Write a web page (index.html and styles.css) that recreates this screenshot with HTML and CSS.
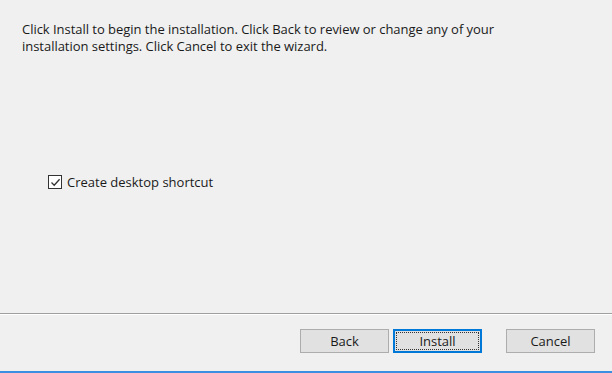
FILE: index.html
```html
<!DOCTYPE html>
<html>
<head>
<meta charset="utf-8">
<link rel="stylesheet" href="styles.css">
</head>
<body>
<div class="dialog">
  <div class="content">
    <p class="intro">Click Install to begin the installation. Click Back to review or change any of your<br>installation settings. Click Cancel to exit the wizard.</p>
    <label class="check">
      <span class="box"><svg width="11" height="11" viewBox="0 0 11 11"><path d="M1.5 5.5 L4.2 8.2 L9.6 2.2" fill="none" stroke="#333" stroke-width="1.3"/></svg></span>
      <span class="check-label">Create desktop shortcut</span>
    </label>
  </div>
  <div class="footer">
    <button class="btn">Back</button>
    <button class="btn primary"><span class="focus">Install</span></button>
    <button class="btn cancel">Cancel</button>
  </div>
  <div class="accent"></div>
</div>
</body>
</html>
```
FILE: styles.css
```css
html, body {
  margin: 0;
  padding: 0;
  background: #f0f0f0;
}
.dialog {
  width: 612px;
  height: 373px;
  display: flex;
  flex-direction: column;
  font-family: "Open Sans", "Liberation Sans", sans-serif;
  font-size: 13px;
  color: #1a1a1a;
}
.content {
  flex: 1;
  padding: 21px 0 0 22px;
  display: flex;
  flex-direction: column;
}
.intro {
  margin: 0;
  line-height: 17px;
  letter-spacing: -0.03px;
}
.check {
  margin: 118px 0 0 26px;
  display: flex;
  align-items: center;
  gap: 5px;
}
.box {
  width: 14px;
  height: 14px;
  box-sizing: border-box;
  border: 1px solid #333;
  background: #fff;
  display: flex;
  align-items: center;
  justify-content: center;
}
.footer {
  height: 58px;
  box-sizing: border-box;
  border-top: 1px solid #a0a0a0;
  box-shadow: inset 0 1px 0 #fff;
  display: flex;
  align-items: flex-start;
  padding: 15px 0 0 300px;
}
.btn {
  width: 89px;
  height: 24px;
  box-sizing: border-box;
  border: 1px solid #adadad;
  background: #e1e1e1;
  font-family: inherit;
  font-size: 13px;
  color: #1a1a1a;
  padding: 0;
  margin: 0;
}
.primary {
  margin-left: 4px;
  border: 2px solid #0078d7;
  padding: 1px;
}
.focus {
  display: flex;
  width: 100%;
  height: 100%;
  box-sizing: border-box;
  border: 1px dotted #333;
  align-items: center;
  justify-content: center;
}
.cancel {
  margin-left: 24px;
}
.accent {
  height: 2px;
  background: #3c8fe0;
}
```
